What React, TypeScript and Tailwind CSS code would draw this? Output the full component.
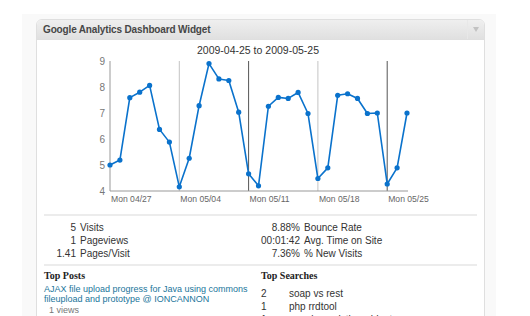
import React from "react";

// daily visits, 31 points (sampled off the chart)
const values = [
  5.0, 5.19, 7.59, 7.8, 8.06, 6.37, 5.88, 4.16, 5.26, 7.28, 8.9, 8.31, 8.25,
  7.03, 4.66, 4.2, 7.26, 7.6, 7.56, 7.79, 6.98, 4.48, 4.89, 7.68, 7.74, 7.56,
  6.98, 7.0, 4.27, 4.89, 7.0,
];

const X0 = 110;
const STEP = 9.9;
const yOf = (v: number) => 191 - (v - 4) * 26;

const weeks = [
  { label: "Mon 04/27", x: X0, dark: false },
  { label: "Mon 05/04", x: X0 + 7 * STEP, dark: false },
  { label: "Mon 05/11", x: X0 + 14 * STEP, dark: true },
  { label: "Mon 05/18", x: X0 + 21 * STEP, dark: false },
  { label: "Mon 05/25", x: X0 + 28 * STEP, dark: true },
];

const Chart: React.FC = () => {
  const pts = values.map((v, i) => [X0 + i * STEP, yOf(v)]);
  return (
    <svg
      width={447}
      height={168}
      viewBox="37 40 447 168"
      className="block"
      style={{ fontFamily: "'Liberation Sans', Arial, sans-serif" }}
    >
      <text x={258} y={54} fontSize={10.5} fill="#333" textAnchor="middle">
        2009-04-25 to 2009-05-25
      </text>
      {[9, 8, 7, 6, 5, 4].map((v) => (
        <text
          key={v}
          x={105}
          y={yOf(v) + 3.5}
          fontSize={10}
          fill="#777"
          textAnchor="end"
        >
          {v}
        </text>
      ))}
      {weeks.slice(1).map((w) => (
        <line
          key={w.label}
          x1={w.x}
          x2={w.x}
          y1={61}
          y2={191}
          stroke={w.dark ? "#555" : "#c4c4c4"}
          strokeWidth={1}
        />
      ))}
      <line x1={110} x2={110} y1={61} y2={191} stroke="#999" />
      <line x1={110} x2={408} y1={191} y2={191} stroke="#999" />
      {weeks.map((w) => (
        <text key={w.label} x={w.x + 1} y={202} fontSize={8.6} fill="#666">
          {w.label}
        </text>
      ))}
      <polyline
        points={pts.map((p) => p.join(",")).join(" ")}
        fill="none"
        stroke="#0a72cc"
        strokeWidth={1.6}
        strokeLinejoin="round"
      />
      {pts.map((p, i) => (
        <circle key={i} cx={p[0]} cy={p[1]} r={2.6} fill="#0a72cc" />
      ))}
    </svg>
  );
};

const stats = [
  ["5", "Visits", "8.88%", "Bounce Rate"],
  ["1", "Pageviews", "00:01:42", "Avg. Time on Site"],
  ["1.41", "Pages/Visit", "7.36%", "% New Visits"],
];

const searches = [
  ["2", "soap vs rest"],
  ["1", "php rrdtool"],
  ["1", "google analytics widget"],
];

const App: React.FC = () => {
  return (
    <div
      className="w-[530px] h-[316px] overflow-hidden bg-white"
      style={{ fontFamily: "'Liberation Sans', Arial, sans-serif" }}
    >
      <div className="ml-[22px] mt-[14px] w-[474px] h-[400px] bg-[#f9f9f9] pt-[5px] pl-[14px] pr-[11px]">
        <div className="w-[449px] h-[400px] rounded-t-[6px] border border-[#dfdfdf] bg-white">
          <div className="h-[20px] flex items-stretch rounded-t-[5px] border-b border-[#dfdfdf] bg-linear-to-b from-[#efefef] to-[#e0e0e0]">
            <div className="flex-1 pl-[6px] text-[10px] leading-[19px] font-bold text-[#464646] tracking-[-0.15px]">
              Google Analytics Dashboard Widget
            </div>
            <div className="w-[17px] border-l border-[#e8e8e8] flex items-center justify-center">
              <div className="w-0 h-0 border-l-[3.5px] border-r-[3.5px] border-t-[5px] border-l-transparent border-r-transparent border-t-[#c2c2c2]" />
            </div>
          </div>
          <Chart />
          <div className="px-[7px]">
            <div className="mt-[6px] h-[2px] bg-[#ececec]" />
            <div className="pt-[5px] pb-[4px] text-[10px] leading-[13px] text-[#333]">
              {stats.map((s) => (
                <div key={s[1]} className="flex">
                  <span className="w-[32px] text-right">{s[0]}</span>
                  <span className="ml-[4px] w-[180px]">{s[1]}</span>
                  <span className="w-[40px] text-right">{s[2]}</span>
                  <span className="ml-[4px]">{s[3]}</span>
                </div>
              ))}
            </div>
            <div className="h-[2px] bg-[#ececec]" />
            <div className="flex pt-[4px]">
              <div className="w-[217px]">
                <div className="text-[10px] leading-[12px] font-bold text-[#222] font-['Liberation_Serif',serif]">
                  Top Posts
                </div>
                <a className="block mt-[3px] text-[9px] leading-[9.5px] text-[#21759b]">
                  AJAX file upload progress for Java using commons fileupload
                  and prototype @ IONCANNON
                </a>
                <div className="pl-[5px] text-[9px] leading-[12px] text-[#777]">
                  1 views
                </div>
              </div>
              <div className="flex-1">
                <div className="text-[10px] leading-[12px] font-bold text-[#222] font-['Liberation_Serif',serif]">
                  Top Searches
                </div>
                <div className="mt-[5px] text-[10px] leading-[13px] text-[#333]">
                  {searches.map((s, i) => (
                    <div key={i} className="flex">
                      <span className="w-[28px]">{s[0]}</span>
                      <span>{s[1]}</span>
                    </div>
                  ))}
                </div>
              </div>
            </div>
          </div>
        </div>
      </div>
    </div>
  );
};

export default App;
